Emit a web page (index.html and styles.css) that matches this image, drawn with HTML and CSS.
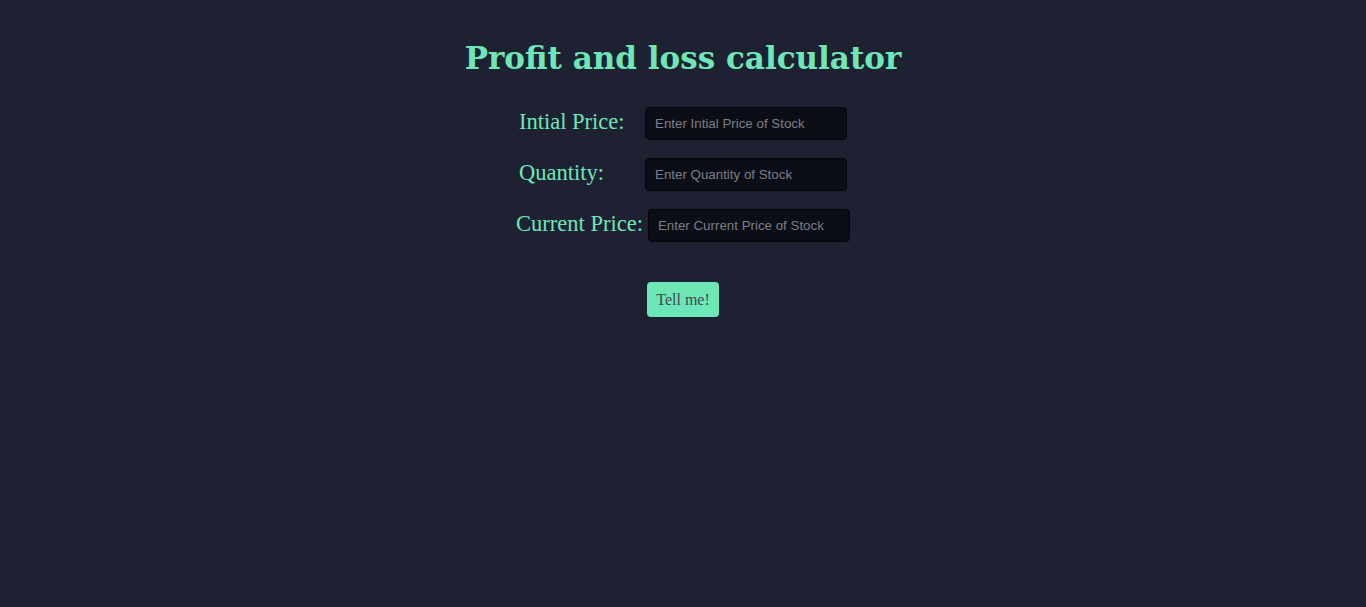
FILE: index.html
```html
<!DOCTYPE html>
<html lang="en">
<head>
<meta charset="utf-8">
<title>Profit and loss calculator</title>
<link rel="stylesheet" href="styles.css">
</head>
<body>
<main class="app">
  <h1 class="title">Profit and loss calculator</h1>
  <div class="row">
    <label class="label" for="ip">Intial Price:</label>
    <input class="field" id="ip" type="number" placeholder="Enter Intial Price of Stock">
  </div>
  <div class="row">
    <label class="label" for="qty">Quantity:</label>
    <input class="field" id="qty" type="number" placeholder="Enter Quantity of Stock">
  </div>
  <div class="row">
    <label class="label" for="cp">Current Price:</label>
    <input class="field" id="cp" type="number" placeholder="Enter Current Price of Stock">
  </div>
  <button class="btn" type="button">Tell me!</button>
</main>
</body>
</html>
```
FILE: styles.css
```css
html, body {
  margin: 0;
  padding: 0;
  background: #1e2132;
  min-height: 100%;
}
body {
  font-family: "DejaVu Serif", "Liberation Serif", serif;
  color: #6ee7b7;
}
.app {
  display: flex;
  flex-direction: column;
  align-items: center;
  padding-top: 36px;
}
.title {
  margin: 0 0 27px;
  font-size: 31px;
  font-weight: bold;
  line-height: 44px;
  color: #6ee7b7;
}
.row {
  display: flex;
  align-items: center;
  gap: 5px;
  margin-bottom: 18px;
}
.label {
  min-width: 121px;
  font-family: "Liberation Serif", "DejaVu Serif", serif;
  font-size: 22.5px;
  line-height: 26px;
  margin-top: -4px;
}
.field {
  box-sizing: border-box;
  width: 202px;
  height: 33px;
  padding: 0 9px;
  background: #0b0e16;
  border: 1px solid #04060a;
  border-radius: 4px;
  color: #ccc;
  font-family: "Liberation Sans", Arial, sans-serif;
  font-size: 13.33px;
  outline: none;
}
.field::placeholder {
  color: #7b7e86;
}
.field::-webkit-outer-spin-button,
.field::-webkit-inner-spin-button {
  -webkit-appearance: none;
  margin: 0;
}
.btn {
  margin-top: 22px;
  width: 72px;
  height: 35px;
  padding: 0;
  background: #6ee7b7;
  color: #3f4a52;
  border: none;
  border-radius: 4px;
  font-family: "Liberation Serif", "DejaVu Serif", serif;
  font-size: 16px;
  cursor: pointer;
}
```
